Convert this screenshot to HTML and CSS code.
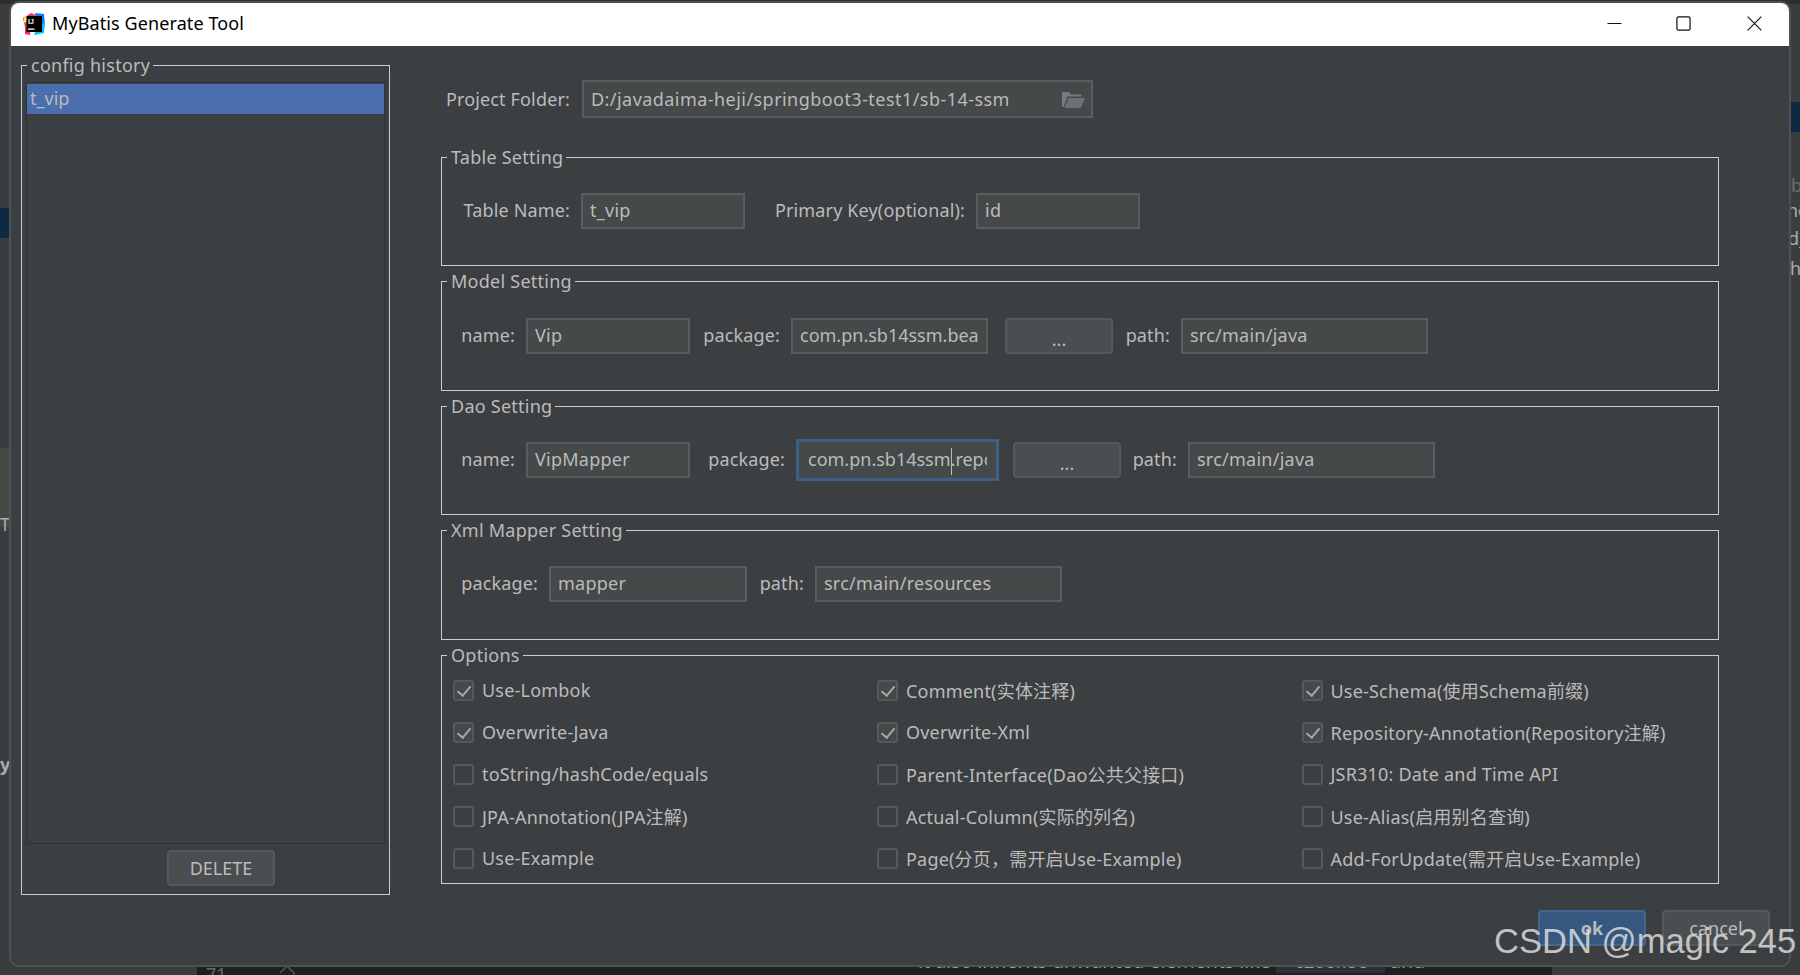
FILE: index.html
```html
<!DOCTYPE html>
<html lang="en">
<head>
<meta charset="utf-8">
<title>MyBatis Generate Tool</title>
<link rel="stylesheet" href="styles.css">
</head>
<body>
<div class="backdrop">
  <div class="bg-top"></div>
  <div class="bg-code">
    <span class="bg-line-no">71</span>
    <svg class="bg-fold" viewBox="0 0 16 10" width="16" height="10" aria-hidden="true"><path d="M1 8L8 1L15 8V10" fill="none" stroke="#55575a" stroke-width="1.500"/></svg>
    <span class="bg-code-text">it also inherits unwanted elements like <code class="bg-tag">&lt;license&gt;</code> and</span>
  </div>
  <span class="bg-stripe-left"></span>
  <span class="bg-green-left"></span>
  <span class="bg-letter bg-t">T</span>
  <span class="bg-letter bg-y">y</span>
  <span class="bg-stripe-right"></span>
  <span class="bg-letter bg-b">b</span>
  <span class="bg-letter bg-ne">ne</span>
  <span class="bg-letter bg-d">d_</span>
  <span class="bg-letter bg-h">h</span>
</div>

<main class="window">
  <header class="titlebar">
    <svg class="app-icon" viewBox="0 0 24 24" width="24" height="24" aria-hidden="true">
      <path d="M1 6 L9 1 L14 3 L8 12 L3 15Z" fill="#ff2f6e"/>
      <path d="M13 1 L22 2 L23 14 L15 9Z" fill="#087cfa"/>
      <path d="M3 13 L9 10 L8 23 L3 22Z" fill="#fe2857"/>
      <path d="M16 12 L23 11 L22 21 L12 23Z" fill="#07c3f2"/>
      <path d="M2 6 L5 3 L8 8 L2 11Z" fill="#fcf84a"/>
      <rect x="4.500" y="4" width="15.500" height="16" fill="#000"/>
      <text class="app-icon-text" x="6" y="11.500">IJ</text>
      <rect x="6" y="16.500" width="6.500" height="1.300" fill="#fff"/>
    </svg>
    <h1 class="title">MyBatis Generate Tool</h1>
    <div class="win-controls">
      <svg class="ctl" viewBox="0 0 16 16" width="15" height="15"><path d="M0.500 8H15.500" stroke="#111" stroke-width="1.200" fill="none"/></svg>
      <svg class="ctl" viewBox="0 0 16 16" width="15" height="15"><rect x="1" y="1" width="14" height="14" rx="1.500" stroke="#111" stroke-width="1.300" fill="none"/></svg>
      <svg class="ctl ctl-close" viewBox="0 0 16 16" width="15" height="15"><path d="M0.700 0.700L15.300 15.300M15.300 0.700L0.700 15.300" stroke="#111" stroke-width="1.200" fill="none"/></svg>
    </div>
  </header>

  <div class="content">
    <aside class="group history">
      <div class="legend">config history</div>
      <ul class="list"><li class="list-item selected">t_vip</li></ul>
      <div class="history-actions"><button class="btn btn-delete">DELETE</button></div>
    </aside>

    <section class="form">
      <div class="project-row">
        <label class="lbl">Project Folder:</label>
        <div class="field field-project">
          <span class="field-text">D:/javadaima-heji/springboot3-test1/sb-14-ssm</span>
          <svg class="folder" viewBox="0 0 23 16" width="23" height="16" aria-hidden="true">
            <path d="M0 15V1.200C0 .5 .5 0 1.200 0H7L9 2.500H18.500C19.200 2.500 19.700 3 19.700 3.700V4.500H5.500L1.500 15Z" fill="#747c7f"/>
            <path d="M6.500 6H23L19 16H2.500Z" fill="#6a7276"/>
          </svg>
        </div>
      </div>

      <div class="group setting">
        <div class="legend">Table Setting</div>
        <div class="row row-table">
          <label class="lbl">Table Name:</label><div class="field">t_vip</div>
          <label class="lbl">Primary Key(optional):</label><div class="field">id</div>
        </div>
      </div>

      <div class="group setting setting-tall">
        <div class="legend">Model Setting</div>
        <div class="row row-model">
          <label class="lbl">name:</label><div class="field">Vip</div>
          <label class="lbl">package:</label><div class="field field-tight">com.pn.sb14ssm.bea</div>
          <span></span><button class="btn btn-dots">...</button>
          <label class="lbl">path:</label><div class="field">src/main/java</div>
        </div>
      </div>

      <div class="group setting">
        <div class="legend">Dao Setting</div>
        <div class="row row-dao">
          <label class="lbl">name:</label><div class="field">VipMapper</div>
          <label class="lbl">package:</label>
          <div class="field field-focus"><div class="field-clip">com.pn.sb14ssm<i class="caret"></i>.repository</div></div>
          <span></span><button class="btn btn-dots">...</button>
          <label class="lbl">path:</label><div class="field">src/main/java</div>
        </div>
      </div>

      <div class="group setting setting-tall">
        <div class="legend">Xml Mapper Setting</div>
        <div class="row row-xml">
          <label class="lbl">package:</label><div class="field">mapper</div>
          <label class="lbl">path:</label><div class="field">src/main/resources</div>
        </div>
      </div>

      <div class="group options">
        <div class="legend">Options</div>
        <div class="option-grid">
          <div class="opt"><i class="box on"></i>Use-Lombok</div>
          <div class="opt"><i class="box on"></i>Comment(实体注释)</div>
          <div class="opt"><i class="box on"></i>Use-Schema(使用Schema前缀)</div>
          <div class="opt"><i class="box on"></i>Overwrite-Java</div>
          <div class="opt"><i class="box on"></i>Overwrite-Xml</div>
          <div class="opt"><i class="box on"></i>Repository-Annotation(Repository注解)</div>
          <div class="opt"><i class="box"></i>toString/hashCode/equals</div>
          <div class="opt"><i class="box"></i>Parent-Interface(Dao公共父接口)</div>
          <div class="opt"><i class="box"></i>JSR310: Date and Time API</div>
          <div class="opt"><i class="box"></i>JPA-Annotation(JPA注解)</div>
          <div class="opt"><i class="box"></i>Actual-Column(实际的列名)</div>
          <div class="opt"><i class="box"></i>Use-Alias(启用别名查询)</div>
          <div class="opt"><i class="box"></i>Use-Example</div>
          <div class="opt"><i class="box"></i>Page(分页，需开启Use-Example)</div>
          <div class="opt"><i class="box"></i>Add-ForUpdate(需开启Use-Example)</div>
        </div>
      </div>

      <div class="actions">
        <button class="btn btn-ok">ok</button>
        <button class="btn btn-cancel">cancel</button>
      </div>
    </section>
  </div>
</main>

<div class="watermark">CSDN @magic 245</div>
</body>
</html>
```
FILE: styles.css
```css
* { box-sizing: border-box; }
html, body { margin: 0; padding: 0; }
body {
  width: 1800px; height: 975px; overflow: hidden; position: relative;
  background: #3a3c3e;
  font-family: "Noto Sans", "Noto Sans CJK SC", sans-serif;
  font-size: 18px; color: #bbbbbb;
}

/* what shows round the dialog */
.backdrop { position: absolute; inset: 0; overflow: hidden; }
.bg-top { position: absolute; left: 0; right: 0; top: 0; height: 4px; background: #2b2d30; }
.bg-code { position: absolute; left: 197px; width: 1355px; top: 965px; height: 10px; overflow: hidden; background: #1e1f20; color: #9a9da1; font-size: 19.500px; line-height: 20px; }
.bg-line-no { position: absolute; left: 9px; top: -1px; color: #66686c; font-size: 18px; }
.bg-fold { position: absolute; left: 82px; top: 0; }
.bg-code-text { position: absolute; left: 721px; top: -14px; white-space: nowrap; }
.bg-tag { font-family: "Liberation Mono", monospace; font-size: 18px; background: #2f3033; padding: 0 6px; }
.bg-stripe-left { position: absolute; left: 0; top: 208px; width: 10px; height: 30px; background: #0e2a42; }
.bg-green-left { position: absolute; left: 0; top: 448px; width: 10px; height: 79px; background: #434a44; }
.bg-stripe-right { position: absolute; right: 0; top: 102px; width: 10px; height: 30px; background: #0e2a42; }
.bg-letter { position: absolute; line-height: 24px; color: #a9abad; }
.bg-t { left: 0; top: 512px; }
.bg-y { left: 0; top: 752px; font-weight: 700; }
.bg-b { left: 1791px; top: 173px; color: #6d6f72; }
.bg-ne { left: 1787px; top: 198px; }
.bg-d { left: 1788px; top: 226px; }
.bg-h { left: 1790px; top: 256px; }

/* dialog */
.window {
  position: absolute; left: 9px; top: 1px; width: 1782px; height: 966px;
  border-radius: 10px; overflow: hidden;
  background: #3c3f41; border: 2px solid #4f5254;
  display: flex; flex-direction: column;
}
.titlebar {
  height: 43px; flex: none; background: #ffffff; color: #000;
  display: flex; align-items: center; padding: 0 0 2px 11px;
}
.app-icon { flex: none; }
.app-icon-text { font: 700 7px "Liberation Sans", sans-serif; fill: #fff; }
.title { margin: 0 0 2px 6px; font-size: 18px; font-weight: 400; flex: 1; letter-spacing: .1px; }
.win-controls { display: flex; align-items: center; gap: 54px; padding-right: 27px; }
.ctl-close { margin-left: 2px; }

.content { flex: 1; display: flex; align-items: flex-start; gap: 51px; padding: 19px 0 0 10px; }

/* titled frames */
.group { border: 1px solid #bcd0e4; background: #3c3f41; }
.legend {
  width: fit-content; height: 24px; line-height: 24px;
  margin: -13px 0 0 5px; padding: 0 3px 0 4px; background: #3c3f41; white-space: nowrap;
  letter-spacing: .25px;
}

.history { width: 369px; height: 830px; display: flex; flex-direction: column; }
.list { list-style: none; margin: 5px 4px 0; padding: 1px 0 0; height: 762px; flex: none; border: 1px solid #323232; }
.list-item { height: 30px; line-height: 28px; padding-left: 3px; }
.selected { background: #4b6eaf; }
.history-actions { display: flex; padding: 6px 0 0 145px; }

.form { width: 1278px; display: flex; flex-direction: column; }
.project-row { display: grid; grid-template-columns: 141px 511px; align-items: center; margin-top: 15px; height: 38px; margin-bottom: 39px; }

.setting { height: 109px; margin-bottom: 15px; }
.setting-tall { height: 110px; }

.row { display: grid; align-items: center; height: 36px; margin: 24px 0 0 19px; }
.row .lbl { padding-bottom: 2px; }
.row-table { grid-template-columns: 120px 164px 231px 164px; }
.row-model { grid-template-columns: 65px 164px 101px 197px 18px 106px 69px 247px; margin-top: 25px; }
.row-dao { grid-template-columns: 65px 164px 106px 203px 15px 106px 68px 247px; height: 42px; margin-top: 21px; }
.row-xml { grid-template-columns: 88px 198px 68px 247px; }

.lbl { display: block; text-align: right; padding-right: 11px; white-space: nowrap; letter-spacing: .15px; }
.project-row .lbl { padding-right: 12px; }

.field {
  height: 36px; line-height: 30px; padding: 0 7px;
  background: #45494a; border: 2px solid #5a5d5e;
  white-space: nowrap; overflow: hidden; letter-spacing: .25px;
}
.field-tight { letter-spacing: 0; }
.field-project { height: 38px; line-height: 34px; display: flex; justify-content: space-between; align-items: center; padding-right: 6px; letter-spacing: .45px; }
.folder { flex: none; margin-top: 2px; }
.field-focus { height: 42px; padding: 0 9px; border: 3px solid #3d6185; line-height: 34px; letter-spacing: 0; }
.field-clip { overflow: hidden; white-space: nowrap; }
.caret { display: inline-block; width: 1px; height: 27px; background: #bbbbbb; vertical-align: middle; margin-right: -1px; }

.btn {
  font: inherit; color: #bbbbbb; height: 36px; padding: 0; flex: none;
  background: #4a4e50; border: 2px solid #56595b; border-radius: 4px;
}
.btn-delete { width: 108px; }
.btn-dots { width: 108px; margin-left: -1px; padding-top: 6px; }
.btn-ok { width: 108px; background: #365880; border-color: #43688f; font-weight: 700; }
.btn-cancel { width: 108px; }

.options { height: 229px; }
.option-grid { display: grid; grid-template-columns: 424px 424.500px 1fr; grid-auto-rows: 42px; margin: 2px 0 0 11px; }
.opt { display: flex; align-items: center; white-space: nowrap; letter-spacing: .2px; }
.box {
  flex: none; width: 21px; height: 21px; margin-right: 8px; position: relative;
  border: 2px solid #56595b; border-radius: 3px; background: #3c3f41;
}
.box.on { background: #45494a; }
.box.on::after {
  content: ""; position: absolute; left: 5px; top: 1px; width: 6px; height: 11px;
  border: solid #a8a8a8; border-width: 0 2.500px 2.500px 0; transform: rotate(40deg);
}

.actions { display: flex; gap: 16px; width: 232px; margin: 26px 0 0 1097px; }

.watermark {
  position: absolute; left: 1494px; top: 921px;
  font-family: "Liberation Sans", sans-serif; font-size: 34.600px; line-height: 40px;
  color: rgba(225,225,225,.82); white-space: nowrap;
}
```
